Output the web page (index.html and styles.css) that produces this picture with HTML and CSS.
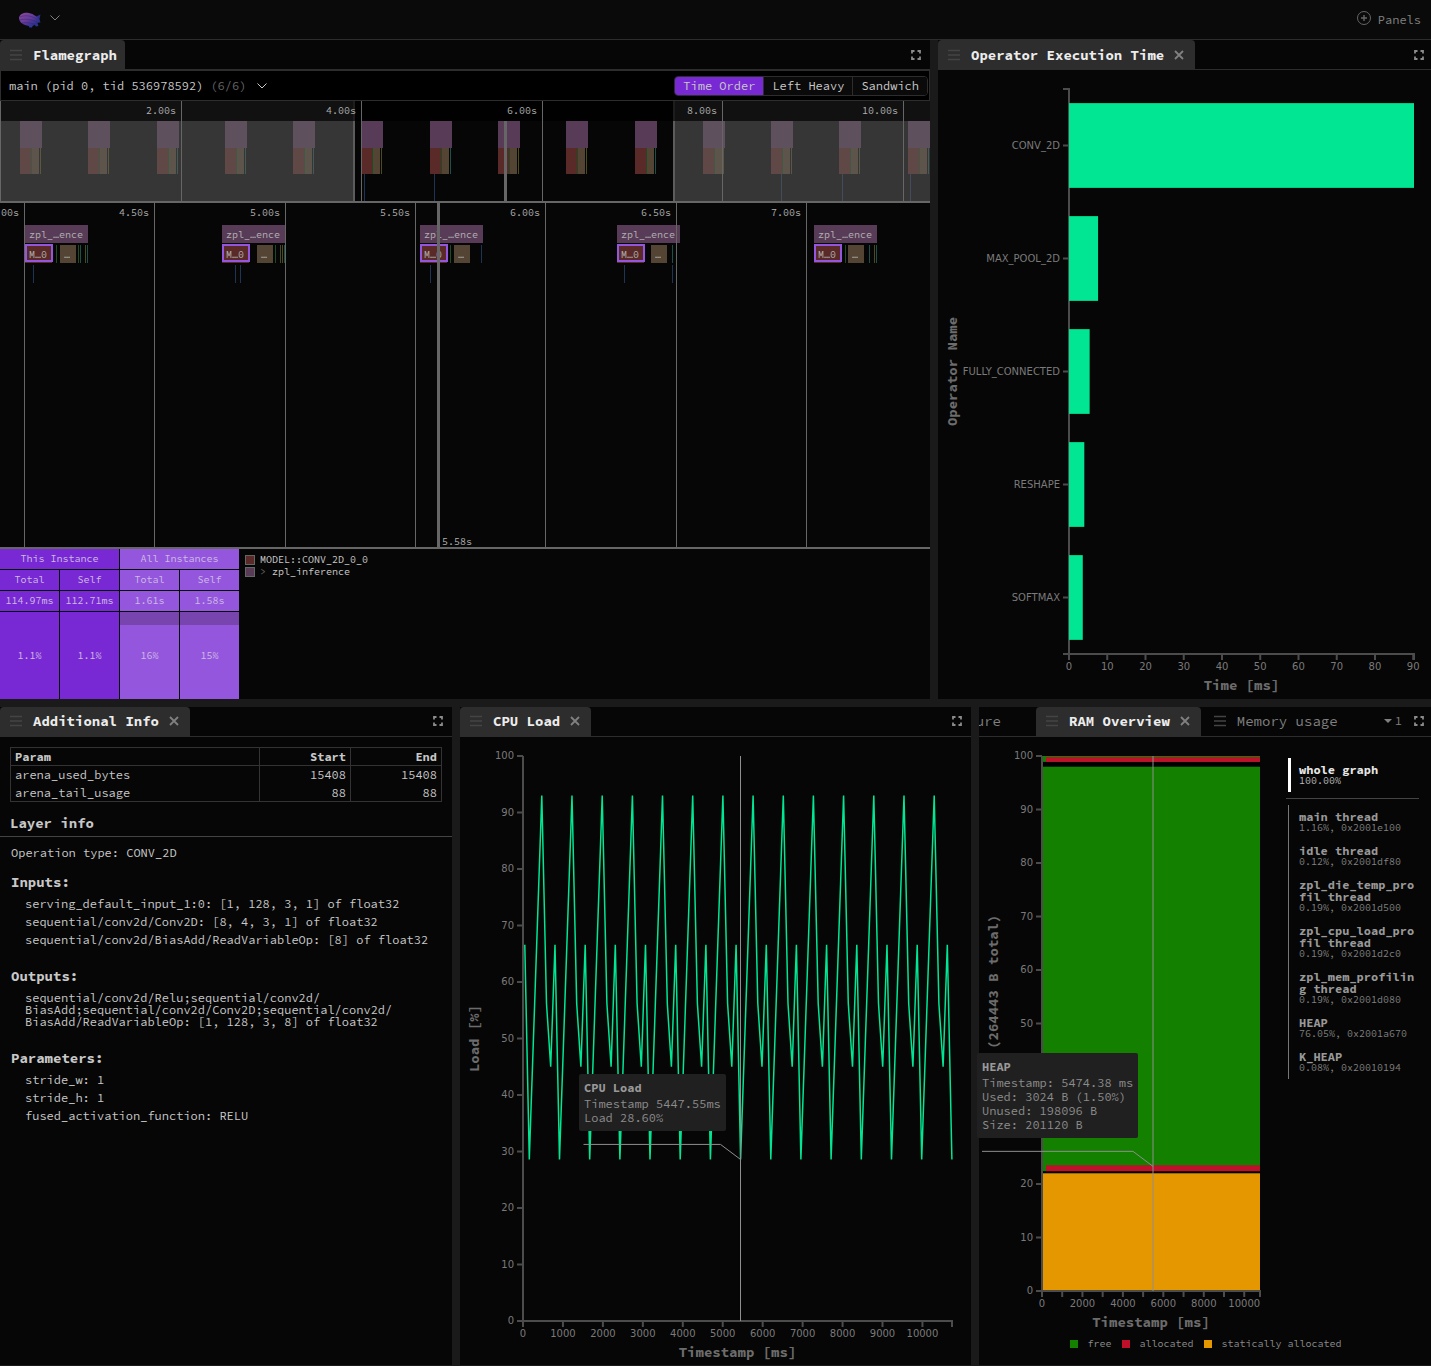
FILE: index.html
```html
<!DOCTYPE html>
<html lang="en">
<head>
<meta charset="utf-8">
<meta name="viewport" content="width=device-width, initial-scale=1">
<title>Flamegraph</title>
<link rel="stylesheet" href="styles.css">
</head>
<body>
<svg class="sprite" aria-hidden="true">
  <symbol id="grip" viewBox="0 0 12 12"><path d="M0 1.500H12M0 6H12M0 10.500H12" fill="none" stroke="currentColor" stroke-width="1.500"/></symbol>
  <symbol id="cross" viewBox="0 0 10 10"><path d="M1 1L9 9M9 1L1 9" fill="none" stroke="currentColor" stroke-width="1.800"/></symbol>
  <symbol id="expand" viewBox="0 0 10 10"><path d="M1 3.500V1H3.500M6.500 1H9V3.500M9 6.500V9H6.500M3.500 9H1V6.500" fill="none" stroke="currentColor" stroke-width="1.800"/></symbol>
  <symbol id="chevron" viewBox="0 0 10 6"><path d="M.5 .5L5 5L9.500 .5" fill="none" stroke="currentColor" stroke-width="1"/></symbol>
</svg>

<header class="topbar">
  <button class="menu-button" type="button" aria-label="Menu">
    <svg class="logo" viewBox="0 0 22 16">
      <defs>
        <linearGradient id="hull" x1="0" y1="0" x2="1" y2="1">
          <stop offset="0" stop-color="#8a4a9e"/><stop offset=".45" stop-color="#6a3c9c"/><stop offset=".8" stop-color="#33318f"/><stop offset="1" stop-color="#1f2a78"/>
        </linearGradient>
      </defs>
      <path d="M16 5L21.500 2.500L20.500 7L21.500 10.500L17 11Z" fill="#2a2f88"/>
      <path d="M9 13L10.500 15.500H13L14 13Z" fill="#2c3b9c"/>
      <path d="M15 12L17 14.500L19.500 14L18.500 11Z" fill="#29358c"/>
      <path d="M0 6C.5 1.500 6 0 10 1C15 2 18.500 5 20 8.500C18.500 12 15 14 11 14C5 13.500 0 10.500 0 6Z" fill="url(#hull)"/>
      <path d="M1 5C7 2.500 14 4 19 8M.5 8C7 6 13 8 18.500 10M3 11C8 10 12 11 16 12.500" fill="none" stroke="#2c2560" stroke-opacity=".6" stroke-width=".7"/>
    </svg>
    <svg class="chevron"><use href="#chevron"/></svg>
  </button>
  <button class="panels-button" type="button">
    <svg class="plus" viewBox="0 0 14 14"><circle cx="7" cy="7" r="6.500" fill="none" stroke="currentColor"/><path d="M4 7H10M7 4V10" stroke="currentColor" stroke-width="1.400"/></svg>
    <span>Panels</span>
  </button>
</header>

<main class="workspace">
  <div class="row row-top">
    <section class="panel">
      <div class="tabbar">
        <div class="tab tab-active tab-fixed"><svg class="grip"><use href="#grip"/></svg><span>Flamegraph</span></div>
        <button class="icon-button" type="button" aria-label="Expand"><svg class="icon"><use href="#expand"/></svg></button>
      </div>
      <div class="flame">
        <div class="flame-toolbar">
          <button class="thread-picker" type="button">
            <span>main (pid 0, tid 536978592)</span><span class="muted">(6/6)</span>
            <svg class="chevron"><use href="#chevron"/></svg>
          </button>
          <div class="segmented">
            <button class="segment segment-on" type="button">Time Order</button>
            <button class="segment" type="button">Left Heavy</button>
            <button class="segment" type="button">Sandwich</button>
          </div>
        </div>
        <div class="minimap" id="minimap"></div>
        <div class="flame-view" id="flame-view"></div>
        <div class="details">
          <table class="stats">
            <colgroup><col class="wide"><col class="wide"><col class="wide"><col></colgroup>
            <thead>
              <tr><th colspan="2">This Instance</th><th colspan="2" class="all">All Instances</th></tr>
              <tr><th>Total</th><th>Self</th><th class="all">Total</th><th class="all">Self</th></tr>
            </thead>
            <tbody>
              <tr><td>114.97ms</td><td>112.71ms</td><td class="all">1.61s</td><td class="all">1.58s</td></tr>
              <tr class="share"><td>1.1%</td><td>1.1%</td><td class="all part">16%</td><td class="all part">15%</td></tr>
            </tbody>
          </table>
          <ul class="stack">
            <li><i class="swatch swatch-model"></i><span>MODEL::CONV_2D_0_0</span></li>
            <li><i class="swatch swatch-zpl"></i><span><span class="muted">&gt;</span> zpl_inference</span></li>
          </ul>
        </div>
      </div>
    </section>

    <section class="panel panel-edge">
      <div class="tabbar">
        <div class="tab tab-active"><svg class="grip"><use href="#grip"/></svg><span>Operator Execution Time</span><button class="close" type="button" aria-label="Close"><svg class="icon"><use href="#cross"/></svg></button></div>
        <button class="icon-button" type="button" aria-label="Expand"><svg class="icon"><use href="#expand"/></svg></button>
      </div>
      <div class="chart" id="operators"></div>
    </section>
  </div>

  <div class="row row-bottom">
    <section class="panel">
      <div class="tabbar">
        <div class="tab tab-active"><svg class="grip"><use href="#grip"/></svg><span>Additional Info</span><button class="close" type="button" aria-label="Close"><svg class="icon"><use href="#cross"/></svg></button></div>
        <button class="icon-button" type="button" aria-label="Expand"><svg class="icon"><use href="#expand"/></svg></button>
      </div>
      <div class="info">
        <table class="params">
          <thead><tr><th>Param</th><th>Start</th><th>End</th></tr></thead>
          <tbody>
            <tr><td>arena_used_bytes</td><td>15408</td><td>15408</td></tr>
            <tr><td>arena_tail_usage</td><td>88</td><td>88</td></tr>
          </tbody>
        </table>
        <h2>Layer info</h2>
        <div class="layer">
          <p>Operation type: CONV_2D</p>
          <h3>Inputs:</h3>
          <ul>
            <li>serving_default_input_1:0: [1, 128, 3, 1] of float32</li>
            <li>sequential/conv2d/Conv2D: [8, 4, 3, 1] of float32</li>
            <li>sequential/conv2d/BiasAdd/ReadVariableOp: [8] of float32</li>
          </ul>
          <h3>Outputs:</h3>
          <ul>
            <li>sequential/<wbr>conv2d/<wbr>Relu;sequential/<wbr>conv2d/<wbr>BiasAdd;sequential/<wbr>conv2d/<wbr>Conv2D;sequential/<wbr>conv2d/<wbr>BiasAdd/<wbr>ReadVariableOp: [1, 128, 3, 8] of float32</li>
          </ul>
          <h3>Parameters:</h3>
          <ul>
            <li>stride_w: 1</li>
            <li>stride_h: 1</li>
            <li>fused_activation_function: RELU</li>
          </ul>
        </div>
      </div>
    </section>

    <section class="panel">
      <div class="tabbar">
        <div class="tab tab-active"><svg class="grip"><use href="#grip"/></svg><span>CPU Load</span><button class="close" type="button" aria-label="Close"><svg class="icon"><use href="#cross"/></svg></button></div>
        <button class="icon-button" type="button" aria-label="Expand"><svg class="icon"><use href="#expand"/></svg></button>
      </div>
      <div class="chart" id="cpu">
        <div class="tooltip"><strong>CPU Load</strong><span>Timestamp 5447.55ms</span><span>Load 28.60%</span></div>
      </div>
    </section>

    <section class="panel panel-edge">
      <div class="tabbar">
        <div class="tab tab-clipped"><span>ure</span></div>
        <div class="tab tab-active"><svg class="grip"><use href="#grip"/></svg><span>RAM Overview</span><button class="close" type="button" aria-label="Close"><svg class="icon"><use href="#cross"/></svg></button></div>
        <div class="tab"><svg class="grip"><use href="#grip"/></svg><span>Memory usage</span></div>
        <button class="more-tabs" type="button"><svg class="caret" viewBox="0 0 8 4"><path d="M0 0H8L4 4Z" fill="currentColor"/></svg>1</button>
        <button class="icon-button" type="button" aria-label="Expand"><svg class="icon"><use href="#expand"/></svg></button>
      </div>
      <div class="ram">
        <div class="ram-main">
          <div class="chart" id="ram">
            <div class="tooltip"><strong>HEAP</strong><span>Timestamp: 5474.38 ms</span><span>Used: 3024 B (1.50%)</span><span>Unused: 198096 B</span><span>Size: 201120 B</span></div>
          </div>
          <div class="regions">
            <button class="region region-on" type="button"><b>whole graph</b><small>100.00%</small></button>
            <ul class="region-list">
              <li><button class="region" type="button"><b>main thread</b><small>1.16%, 0x2001e100</small></button></li>
              <li><button class="region" type="button"><b>idle thread</b><small>0.12%, 0x2001df80</small></button></li>
              <li><button class="region" type="button"><b>zpl_die_temp_profil thread</b><small>0.19%, 0x2001d500</small></button></li>
              <li><button class="region" type="button"><b>zpl_cpu_load_profil thread</b><small>0.19%, 0x2001d2c0</small></button></li>
              <li><button class="region" type="button"><b>zpl_mem_profiling thread</b><small>0.19%, 0x2001d080</small></button></li>
              <li><button class="region" type="button"><b>HEAP</b><small>76.05%, 0x2001a670</small></button></li>
              <li><button class="region" type="button"><b>K_HEAP</b><small>0.08%, 0x20010194</small></button></li>
            </ul>
          </div>
        </div>
        <ul class="legend">
          <li><i class="key key-free"></i>free</li>
          <li><i class="key key-allocated"></i>allocated</li>
          <li><i class="key key-static"></i>statically allocated</li>
        </ul>
      </div>
    </section>
  </div>
</main>
<script src="app.js"></script>
</body>
</html>
```

FILE: styles.css
```css
:root {
  --bg: #060606;
  --gap: #1a1a1a;
  --line: #2d2d2d;
  --text: #c8c8c8;
  --dim: #7a7a7a;
  --violet: #7829d3;
  --violet-light: #9456dd;
  --green: #00e692;
  --mono: "Source Code Pro", "DejaVu Sans Mono", "Liberation Mono", monospace;
}

* { box-sizing: border-box; }

body {
  margin: 0;
  height: 100vh;
  min-height: 700px;
  display: flex;
  flex-direction: column;
  background: var(--gap);
  color: var(--text);
  font: 12px/12px var(--mono);
}

button {
  margin: 0;
  padding: 0;
  border: 0;
  background: none;
  color: inherit;
  font: inherit;
  cursor: pointer;
}

ul { margin: 0; padding: 0; list-style: none; }
svg { display: block; flex: none; }
.sprite { width: 0; height: 0; position: absolute; }
.muted { color: #666; }
.icon { width: 10px; height: 10px; }
.chevron { width: 10px; height: 6px; }

/* top bar */
.topbar {
  height: 40px;
  flex: none;
  display: flex;
  align-items: center;
  justify-content: space-between;
  padding: 0 10px 0 19px;
  background: #0a0a0a;
  border-bottom: 1px solid var(--line);
}
.menu-button { display: flex; align-items: center; gap: 9px; color: #808080; }
.menu-button .chevron { margin-bottom: 4px; }
.logo { width: 22px; height: 16px; }
.panels-button { display: flex; align-items: center; gap: 7px; color: #808080; }
.plus { width: 14px; height: 14px; margin-bottom: 4px; color: #666; }

/* workspace grid */
.workspace {
  flex: 1;
  min-height: 0;
  display: grid;
  grid-template-rows: 1fr 1fr;
  gap: 8px;
  padding-bottom: 1px;
}
.row { display: grid; gap: 8px; min-height: 0; }
.row-top { grid-template-columns: 930fr 493fr; }
.row-bottom { grid-template-columns: 452fr 511fr 452fr; }
.panel {
  min-width: 0;
  min-height: 0;
  display: flex;
  flex-direction: column;
  background: var(--bg);
}

/* tabs */
.tabbar {
  height: 30px;
  flex: none;
  display: flex;
  align-items: center;
  gap: 3px;
  padding-right: 9px;
  border-bottom: 1px solid var(--line);
}
.panel-edge .tabbar { padding-right: 7px; }
.tab {
  height: 29px;
  display: flex;
  align-items: center;
  padding: 0 11px 0 10px;
  color: #808080;
  font-size: 14px;
  white-space: nowrap;
}
.tab-active {
  background: var(--line);
  border-radius: 4px 4px 0 0;
  color: #ececec;
  font-weight: bold;
}
.tab-fixed { padding-right: 8px; }
.tab-clipped { width: 54px; padding: 0 32px 0 0; justify-content: flex-end; overflow: hidden; }
.grip { width: 12px; height: 12px; margin-right: 11px; color: #444; }
.close { margin-left: 10px; color: #808080; }
.icon-button { margin-left: auto; color: #8a8a8a; }
.more-tabs { display: flex; align-items: center; gap: 3px; margin-left: auto; color: #808080; }
.more-tabs + .icon-button { margin-left: 9px; }
.caret { width: 8px; height: 4px; }

/* flamegraph */
.flame {
  flex: 1;
  min-height: 0;
  display: flex;
  flex-direction: column;
}
.flame-toolbar {
  height: 31px;
  flex: none;
  display: flex;
  align-items: center;
  justify-content: space-between;
  padding: 0 1px 0 8px;
  border: 1px solid var(--line);
  background: #000;
}
.thread-picker { display: flex; align-items: center; gap: 7px; }
.thread-picker .chevron { margin-left: 4px; }
.segmented {
  display: flex;
  border: 1px solid var(--line);
  border-radius: 4px;
  overflow: hidden;
}
.segment { height: 18px; padding: 0 8px; background: #0a0a0a; }
.segment + .segment { border-left: 1px solid var(--line); }
.segment-on { background: var(--violet); }
.minimap { height: 102px; flex: none; border-bottom: 2px solid #666; }
.flame-view { flex: 1; min-height: 0; border-bottom: 2px solid #666; }
.flame text, .details { font: 10px/12px var(--mono); }
.flame text { fill: #b0b0b0; }
.details { height: 150px; flex: none; display: flex; }

.stats { width: 239px; height: 150px; table-layout: fixed; border-collapse: separate; border-spacing: 0; }
.stats .wide { width: 60px; }
.stats th, .stats td {
  height: 21px;
  padding: 0;
  border: solid var(--bg);
  border-width: 0 1px 1px 0;
  background: var(--violet);
  color: #cdbbe6;
  font-weight: normal;
  text-align: center;
}
.stats tr > .all { background: var(--violet-light); }
.stats tr > :last-child { border-right: 0; }
.stats .share td { height: 87px; padding-top: 2px; border-bottom: 0; }
.stats .share > .part { background: linear-gradient(#7844ae 15%, var(--violet-light) 15%); }

.stack { padding: 5px 6px; }
.stack li { display: flex; align-items: center; gap: 5px; white-space: pre; }
.swatch { width: 10px; height: 10px; border: 1px solid #666; }
.swatch-model { background: #5a2a29; }
.swatch-zpl { background: #583b57; }

/* charts */
.chart { flex: 1; min-width: 0; min-height: 0; position: relative; }
.chart svg { position: absolute; overflow: visible; }
.tick { font: 10px "DejaVu Sans", sans-serif; fill: #7a7a7a; }
.axis { stroke: #4c4c4c; stroke-width: 2; fill: none; }
.title { font: bold 14px var(--mono); fill: #6c6c6c; text-anchor: middle; }
.series { fill: none; stroke: var(--green); stroke-width: 1.5; }
.bar { fill: var(--green); }
.cursor { stroke: #8f8f8f; fill: none; }
.tooltip {
  position: absolute;
  z-index: 1;
  display: flex;
  flex-direction: column;
  padding: 7px 5px 6px;
  border-radius: 2px;
  background: #202020;
  color: #8c8c8c;
  line-height: 14px;
  white-space: nowrap;
}
.tooltip strong { margin-bottom: 2px; color: #999; }

/* additional info */
.info { padding-top: 10px; overflow: hidden; }
.params {
  width: calc(100% - 20px);
  margin: 0 10px;
  table-layout: fixed;
  border-collapse: collapse;
  border: 1px solid #333;
}
.params th, .params td { height: 18px; padding: 2px 4px 0; text-align: right; border-left: 1px solid #333; }
.params th { border-bottom: 1px solid #333; }
.params tr > :first-child { width: 249px; text-align: left; }
.info h2 {
  margin: 11px 0 0;
  padding: 0 10px 3px;
  border-bottom: 1px solid #444;
  font-size: 14px;
  font-weight: bold;
  line-height: 20px;
}
.layer { padding: 10px 11px; }
.layer p { margin: 0; }
.layer h3 { margin: 21px 0 7px; font-size: 14px; font-weight: bold; line-height: 18px; }
.layer p + h3 { margin-top: 14px; }
.layer ul { display: flex; flex-direction: column; gap: 6px; padding-left: 14px; }

/* ram overview */
.ram { flex: 1; min-height: 0; display: flex; flex-direction: column; }
.ram-main { flex: 1; min-height: 0; display: flex; }
.regions { width: 133px; flex: none; margin: 21px 12px 0 0; }
.region {
  width: 100%;
  display: flex;
  flex-direction: column;
  padding: 6px 0 6px 10px;
  color: #999;
  text-align: left;
  word-break: break-all;
}
.region small { color: #808080; font-size: 10px; line-height: 10px; }
.region-on { width: 131px; margin-left: 2px; padding-left: 8px; border-left: 3px solid #fff; color: #e6e6e6; }
.region-on small { color: #bbb; }
.region-list { margin-top: 6px; padding: 6px 0 0 2px; border-top: 1px solid #444; }
.region-list li { border-left: 1px solid #777; }
.legend { display: flex; justify-content: center; gap: 10px; padding: 0 0 15px 1px; color: #8a8a8a; font-size: 10px; }
.legend li { display: flex; align-items: center; gap: 10px; }
.key { width: 8px; height: 8px; }
.key-free { background: #138000; }
.key-allocated { background: #bf0f2b; }
.key-static { background: #e59700; }
```

FILE: app.js
```js
const NS = 'http://www.w3.org/2000/svg';

function make(parent, name, attrs, text) {
  const node = document.createElementNS(NS, name);
  for (const key in attrs) node.setAttribute(key, attrs[key]);
  if (text !== undefined) node.textContent = text;
  parent.appendChild(node);
  return node;
}

function canvas(host) {
  const old = host.querySelector('svg');
  if (old) old.remove();
  const w = host.clientWidth, h = host.clientHeight;
  return { svg: make(host, 'svg', { width: w, height: h }), w, h };
}

const rect = (p, x, y, w, h, fill) => make(p, 'rect', { x, y, width: w, height: h, fill });

/* ---- flamegraph ---- */
const COLORS = { z: '#583b57', m: '#5a2a29', b: '#544433', g: '#1f4a23', o: '#4c4a1f', t: '#1f5048', n: '#1f3354' };
const SPAN = 930;
const RUNS = [[20, 'o'], [88, 'o'], [157, 't'], [225, 't'], [293, 't'], [361, 'o'], [430, 't'],
  [498, 'o'], [566, 'o'], [635, 't'], [703, 'o'], [771, 'o'], [839, 'o'], [908, 't']];

function drawMinimap() {
  const { svg, w, h } = canvas(document.getElementById('minimap'));
  const k = w / SPAN, X = v => Math.round(v * k);
  for (const [x, tail] of RUNS) {
    rect(svg, X(x), 20, 22 * k, 27, COLORS.z);
    rect(svg, X(x), 47, 11 * k, 26, COLORS.m);
    rect(svg, X(x + 11), 47, 1, 26, COLORS.g);
    rect(svg, X(x + 12), 47, 7 * k, 26, COLORS.b);
    rect(svg, X(x + 20), 47, 1, 26, COLORS[tail]);
  }
  for (const x of [364, 434, 781, 842, 910]) rect(svg, X(x), 73, 1, h - 73, COLORS.n);
  const left = X(354), right = X(674);
  rect(svg, 0, 0, left, h, 'rgba(102,102,102,.5)');
  rect(svg, right, 0, w - right, h, 'rgba(102,102,102,.5)');
  rect(svg, left - 1, 0, 2, h, '#5c5c5c');
  rect(svg, right - 1, 0, 2, h, '#5c5c5c');
  rect(svg, 0, 0, w, 20, 'rgba(0,0,0,.68)');
  rect(svg, X(504), 20, 3, h - 20, '#666');
  [0, 181, 361, 542, 722, 903].forEach((x, i) => {
    rect(svg, X(x), 0, 1, h, '#666');
    if (i) make(svg, 'text', { x: X(x) - 5, y: 13, 'text-anchor': 'end' }, (i * 2).toFixed(2) + 's');
  });
}

const FRAMES = [
  { x: 25, b: 60, thin: [[56, 'g'], [78, 'g'], [80, 't'], [85, 'o'], [87, 't']], deep: [33] },
  { x: 222, b: 257, thin: [[275, 'g'], [280, 'o'], [282, 'o'], [284, 't']], deep: [235, 240] },
  { x: 420, b: 454, thin: [[450, 'g'], [481, 'n']], deep: [430] },
  { x: 617, b: 651, thin: [[672, 't']], deep: [624, 672] },
  { x: 814, b: 848, thin: [[845, 'g'], [869, 't'], [874, 'o'], [876, 't']], deep: [] },
];

function drawView() {
  const { svg, w, h } = canvas(document.getElementById('flame-view'));
  const k = w / SPAN, X = v => Math.round(v * k);
  for (const f of FRAMES) {
    rect(svg, X(f.x), 22, Math.round(63 * k), 18, COLORS.z);
    rect(svg, X(f.x), 42, 27 * k, 18, COLORS.m);
    rect(svg, X(f.b), 42, 16 * k, 18, COLORS.b);
    make(svg, 'rect', { x: X(f.x) + 1, y: 42, width: 26 * k, height: 16, fill: 'none', stroke: '#9456dd', 'stroke-width': 2 });
    for (const [x, c] of f.thin) rect(svg, X(x), 42, 1, 18, COLORS[c]);
    for (const x of f.deep) rect(svg, X(x), 62, 1, 18, COLORS.n);
    make(svg, 'text', { x: X(f.x) + 4, y: 35 }, 'zpl_…ence');
    make(svg, 'text', { x: X(f.x) + 4, y: 55 }, 'M…0');
    make(svg, 'text', { x: X(f.b) + 4, y: 55 }, '…');
  }
  ['4.00', '4.50', '5.00', '5.50', '6.00', '6.50', '7.00'].forEach((t, i) => {
    const x = X(24 + i * 130.34);
    rect(svg, x, 0, 1, h, '#666');
    make(svg, 'text', { x: x - 5, y: 13, 'text-anchor': 'end' }, t + 's');
  });
  rect(svg, X(437), 0, 3, h, '#666');
  make(svg, 'text', { x: X(442), y: h - 2 }, '5.58s');
  svg.style.overflow = 'hidden';
}

/* ---- axes shared by the charts ---- */
function xAxis(svg, box, max, ticks, label, title) {
  const y = box.bottom, scale = v => box.left + (box.right - box.left) * v / max;
  make(svg, 'path', { class: 'axis', d: `M${box.left} ${y}H${box.right}V${y + 6}` });
  for (const v of ticks) {
    make(svg, 'path', { class: 'axis', d: `M${scale(v)} ${y}v6` });
    if (label(v)) make(svg, 'text', { class: 'tick', x: scale(v), y: y + 16, 'text-anchor': 'middle' }, v);
  }
  make(svg, 'text', { class: 'title', x: (box.left + box.right) / 2, y: y + 36 }, title);
  return scale;
}

function yAxis(svg, box) {
  const scale = v => box.bottom - (box.bottom - box.top) * v / 100;
  make(svg, 'path', { class: 'axis', d: `M${box.left} ${box.top}V${box.bottom}` });
  for (let v = 0; v <= 100; v += 10) {
    make(svg, 'path', { class: 'axis', d: `M${box.left} ${scale(v)}h-6` });
    make(svg, 'text', { class: 'tick', x: box.left - 9, y: scale(v) + 3, 'text-anchor': 'end' }, v);
  }
  return scale;
}

function sideTitle(svg, x, y, text, anchor) {
  make(svg, 'text', { class: 'title', transform: `translate(${x} ${y}) rotate(-90)`, style: `text-anchor:${anchor}` }, text);
}

/* cursor line, leader and tooltip box for one data point; axis labels under the box are dropped */
function point(host, svg, box, x, y) {
  const tip = host.querySelector('.tooltip');
  const left = x - 15 - tip.offsetWidth;
  make(svg, 'path', { class: 'cursor', d: `M${x} ${box.top}V${box.bottom}` });
  make(svg, 'path', { class: 'cursor', d: `M${left + 5} ${y - 15}H${x - 20}L${x} ${y}` });
  tip.style.left = Math.round(left) + 'px';
  tip.style.top = Math.round(y - 28 - tip.offsetHeight) + 'px';
  const t = tip.getBoundingClientRect();
  for (const label of svg.querySelectorAll('.tick')) {
    const r = label.getBoundingClientRect();
    if (r.left < t.right && r.right > t.left && r.top < t.bottom && r.bottom > t.top) label.remove();
  }
}

const range = (n, step) => Array.from({ length: n }, (_, i) => i * step);

/* ---- operator execution time ---- */
const OPS = [['CONV_2D', 90.2], ['MAX_POOL_2D', 7.6], ['FULLY_CONNECTED', 5.4], ['RESHAPE', 4], ['SOFTMAX', 3.6]];

function drawOperators() {
  const { svg, w, h } = canvas(document.getElementById('operators'));
  const box = { left: 131, right: w - 17, top: 19, bottom: h - 45 };
  const X = xAxis(svg, box, 90.2, range(10, 10), () => true, 'Time [ms]');
  make(svg, 'path', { class: 'axis', d: `M${box.left - 6} ${box.top}H${box.left}V${box.bottom}H${box.left - 6}` });
  const step = (box.bottom - box.top) / OPS.length;
  OPS.forEach(([name, ms], i) => {
    const y = box.top + step * i, mid = y + step / 2;
    make(svg, 'rect', { class: 'bar', x: box.left, y: y + step / 8, width: X(ms) - box.left, height: step * 0.75 });
    make(svg, 'path', { class: 'axis', d: `M${box.left} ${mid}h-6` });
    make(svg, 'text', { class: 'tick', x: box.left - 9, y: mid + 3, 'text-anchor': 'end' }, name);
  });
  sideTitle(svg, 19, (box.top + box.bottom) / 2, 'Operator Name', 'middle');
}

/* ---- cpu load ---- */
const CYCLE = [[45, 66.6], [158, 28.6], [471, 93], [589, 56.2], [694, 45]];

function drawCpu() {
  const host = document.getElementById('cpu');
  const { svg, w, h } = canvas(host);
  const box = { left: 63, right: w - 19, top: 19, bottom: h - 45 };
  const Y = yAxis(svg, box);
  const X = xAxis(svg, box, 10740, range(11, 1000), () => true, 'Timestamp [ms]');
  const pts = [];
  for (let c = 0; c < 15; c++)
    for (const [t, load] of CYCLE) {
      const ms = t + c * 755.6;
      if (ms <= 10740) pts.push(`${X(ms).toFixed(1)},${Y(load).toFixed(1)}`);
    }
  make(svg, 'polyline', { class: 'series', points: pts.join(' ') });
  sideTitle(svg, 19, (box.top + box.bottom) / 2, 'Load [%]', 'middle');
  point(host, svg, box, Math.round(X(5447.55)) - 0.5, Y(28.6));
}

/* ---- ram overview ---- */
function drawRam() {
  const host = document.getElementById('ram');
  const { svg, w, h } = canvas(host);
  const box = { left: 63, right: w - 26, top: 19, bottom: h - 48 };
  const Y = v => box.bottom - (box.bottom - box.top) * v / 100;
  const band = (lo, hi, fill, x = box.left) => rect(svg, x, Y(hi), box.right - x, Y(lo) - Y(hi), fill);
  band(0, 100, '#000');
  band(0, 22, '#e59700');
  band(22.4, 98, '#138000');
  band(98.9, 100, '#138000');
  band(22.4, 23.5, '#bf0f2b', box.left + 4);
  band(98.9, 99.8, '#bf0f2b', box.left + 4);
  yAxis(svg, box);
  const X = xAxis(svg, box, 10780, range(11, 1000), v => v % 2000 === 0, 'Timestamp [ms]');
  sideTitle(svg, 19, (box.top + box.bottom) / 2 - 109, '(264443 B total)', 'end');
  point(host, svg, box, Math.round(X(5474.38)), Y(23.3));
}

function draw() {
  drawMinimap();
  drawView();
  drawOperators();
  drawCpu();
  drawRam();
}

draw();
window.addEventListener('resize', draw);
```
